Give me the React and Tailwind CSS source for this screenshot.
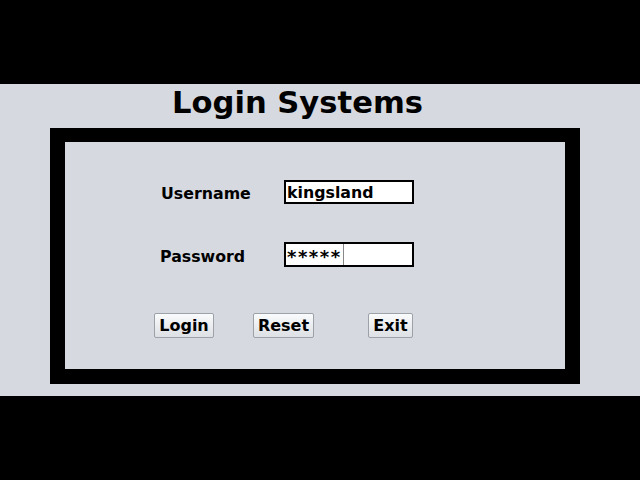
export default function App() {
  const font = { fontFamily: '"DejaVu Sans", Verdana, sans-serif' };
  const btn =
    "h-[25px] rounded-[2px] border border-[#9da2a8] bg-gradient-to-b from-[#fafbfc] to-[#dde0e4] text-[16px] font-bold text-black leading-none flex items-center justify-center pt-[1px]";
  return (
    <div className="w-[640px] h-[480px] bg-black flex flex-col" style={font}>
      <div className="h-[84px] shrink-0" />
      <div className="h-[312px] shrink-0 bg-[#d6d9e0] flex flex-col">
        <div className="pl-[172px] text-[30.6px] font-bold text-black leading-[38px] h-[44px]">
          Login Systems
        </div>
        <div className="ml-[50px] w-[530px] h-[256px] bg-black pt-[14px] pl-[15px]">
          <div className="w-[500px] h-[227px] bg-[#d6d9e0] pt-[38px] flex flex-col">
            <div className="flex items-start pl-[96px]">
              <div className="w-[123px] mt-[5px] text-[15.8px] font-bold text-black leading-[18px]">
                Username
              </div>
              <div className="w-[130px] h-[24px] border-2 border-black bg-white flex items-center pl-[1px] pt-[2px] text-[15.8px] font-bold text-black leading-none">
                kingsland
              </div>
            </div>
            <div className="flex items-start pl-[95px] mt-[38px]">
              <div className="w-[124px] mt-[6px] text-[15.8px] font-bold text-black leading-[18px]">
                Password
              </div>
              <div className="w-[130px] h-[25px] border-2 border-black bg-white flex items-stretch">
                <span className="flex items-center pl-[1px] pr-[1px] border-r border-[#888] text-[18px] font-bold text-black tracking-[1.5px] leading-none pt-[5px]">
                  *****
                </span>
              </div>
            </div>
            <div className="flex pl-[89px] mt-[46px]">
              <div className={btn + " w-[60px]"}>Login</div>
              <div className={btn + " w-[61px] ml-[39px]"}>Reset</div>
              <div className={btn + " w-[45px] ml-[54px]"}>Exit</div>
            </div>
          </div>
        </div>
      </div>
    </div>
  );
}
